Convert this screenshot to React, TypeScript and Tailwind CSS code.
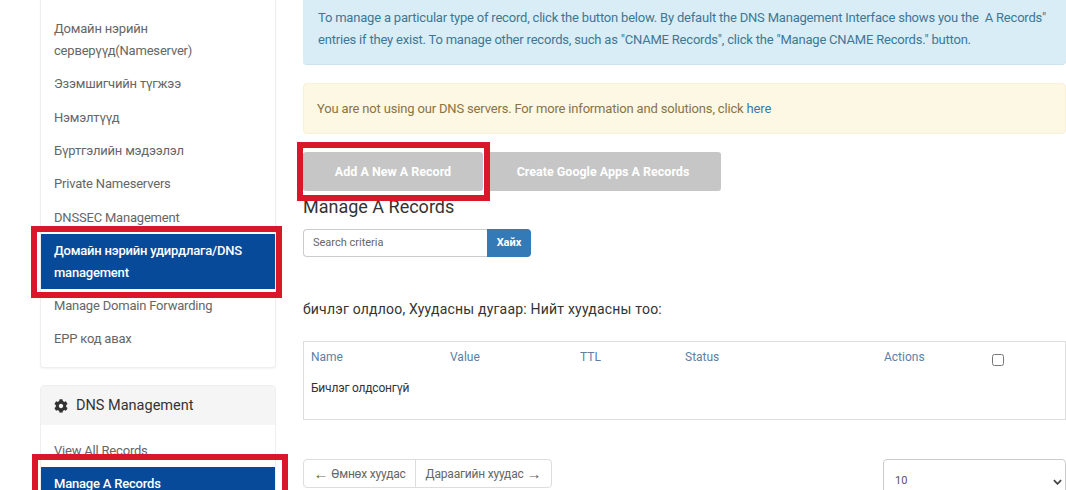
import React from "react";
import { FaCog } from "react-icons/fa";

const font = { fontFamily: "Roboto, 'Noto Sans', sans-serif" };

function Item({ children, active }: { children: React.ReactNode; active?: boolean }) {
  return (
    <a
      className={
        active
          ? "block px-[13px] py-[5.65px] text-[13px] leading-[22px] tracking-[-0.2px] font-medium text-white bg-[#074a9a]"
          : "block px-[13px] py-[5.65px] text-[13px] leading-[22px] tracking-[-0.2px] text-[#666666]"
      }
    >
      {children}
    </a>
  );
}

function Frame({ className }: { className: string }) {
  return <div className={"absolute border-[6px] border-[#d8182a] pointer-events-none " + className} />;
}

export default function App() {
  return (
    <div className="relative h-[490px] w-[1066px] overflow-hidden bg-white flex items-start" style={font}>
      <aside className="ml-[40px] w-[236px] shrink-0 flex flex-col gap-[17px]">
        <div className="bg-white border-x border-b border-[#eeeeee] rounded-b-[4px] pt-[12.5px] pb-[11px] shadow-[0_1px_2px_rgba(0,0,0,0.05)]">
          <Item>Домайн нэрийн серверүүд(Nameserver)</Item>
          <Item>Эзэмшигчийн түгжээ</Item>
          <Item>Нэмэлтүүд</Item>
          <Item>Бүртгэлийн мэдээлэл</Item>
          <Item>Private Nameservers</Item>
          <Item>DNSSEC Management</Item>
          <Item active>Домайн нэрийн удирдлага/DNS management</Item>
          <Item>Manage Domain Forwarding</Item>
          <Item>EPP код авах</Item>
        </div>
        <div className="bg-white border border-[#eeeeee] rounded-[4px]">
          <div className="h-[39px] bg-[#f5f5f5] flex items-center gap-[8px] px-[13px] text-[14.5px] text-[#333333]">
            <FaCog className="w-[14px] h-[14px]" />
            <span>DNS Management</span>
          </div>
          <div className="pt-[9px]">
            <Item>View All Records</Item>
            <Item active>Manage A Records</Item>
          </div>
        </div>
      </aside>

      <main className="ml-[27px] flex-1 min-w-0 flex flex-col">
        <div className="h-[65px] bg-[#d9edf7] border-b border-[#cde4ef] rounded-b-[4px] pt-[7px] px-[15px] text-[13px] leading-[22px] text-[#3f7793] tracking-[-0.2px]">
          To manage a particular type of record, click the button below. By default the DNS Management Interface shows you the&nbsp; A Records" entries if they exist. To manage other records, such as "CNAME Records", click the "Manage CNAME Records." button.
        </div>
        <div className="mt-[18px] h-[51px] bg-[#fcf8e3] border border-[#f8f0d8] rounded-[4px] px-[13px] flex items-center text-[13px] text-[#8a7345] tracking-[-0.17px]">
          <span>
            You are not using our DNS servers. For more information and solutions, click <a className="text-[#337ab7]">here</a>
          </span>
        </div>
        <div className="mt-[18px] flex gap-[2px]">
          <button className="w-[180px] h-[39px] pt-[1px] bg-[#c6c6c6] rounded-[3px] text-white text-[12.5px] font-bold">Add A New A Record</button>
          <button className="w-[236px] h-[39px] pt-[1px] bg-[#c6c6c6] rounded-[3px] text-white text-[12.5px] font-bold">Create Google Apps A Records</button>
        </div>
        <h3 className="mt-[5px] text-[18px] leading-[22px] text-[#333333]">Manage A Records</h3>
        <div className="mt-[11px] flex h-[28px]">
          <input
            readOnly
            placeholder="Search criteria"
            className="w-[184px] border border-[#cccccc] border-r-0 rounded-l-[4px] px-[9px] text-[11px] text-[#555555] placeholder:text-[#666666] outline-none"
          />
          <button className="w-[44px] bg-[#337ab7] rounded-r-[4px] text-white text-[11px] font-bold">Хайх</button>
        </div>
        <p className="mt-[42px] text-[14px] leading-[20px] text-[#333333] tracking-[0.2px]">бичлэг олдлоо, Хуудасны дугаар: Нийт хуудасны тоо:</p>
        <div className="mt-[22px] h-[79px] border border-[#dddddd] text-[12px]">
          <div className="flex h-[38px] pt-[7px] pl-[7px] text-[#5b7fa6] leading-[16px]">
            <span className="w-[139px]">Name</span>
            <span className="w-[130px]">Value</span>
            <span className="w-[105px]">TTL</span>
            <span className="w-[199px]">Status</span>
            <span className="w-[108px]">Actions</span>
            <input type="checkbox" readOnly className="w-[12px] h-[12px] mt-[5px]" />
          </div>
          <div className="pl-[7px] text-[#333333] leading-[16px] tracking-[-0.2px]">Бичлэг олдсонгүй</div>
        </div>
        <div className="mt-[39px] flex justify-between items-start">
          <div className="flex h-[29px] border border-[#dddddd] rounded-[4px] text-[12px] text-[#666666] tracking-[-0.2px]">
            <span className="w-[112px] justify-center flex items-center gap-[3px] border-r border-[#dddddd]"><span className="text-[15px] leading-[16px]">←</span>Өмнөх хуудас</span>
            <span className="w-[135px] justify-center flex items-center gap-[3px]">Дараагийн хуудас<span className="text-[15px] leading-[16px]">→</span></span>
          </div>
          <div className="w-[183px] h-[40px] border border-[#cccccc] rounded-[4px] flex items-center justify-between pl-[11px] pr-[3px] pt-[5px] text-[11px] text-[#555555]">
            <span>10</span>
            <svg viewBox="0 0 10 6" className="w-[9px] h-[6px]" fill="none" stroke="#444444" strokeWidth="2"><path d="M1 1l4 4 4-4" /></svg>
          </div>
        </div>
      </main>

      <Frame className="left-[31px] top-[226px] w-[251px] h-[72px]" />
      <Frame className="left-[32px] top-[454px] w-[256px] h-[72px]" />
      <Frame className="left-[297px] top-[142px] w-[193px] h-[59px]" />
    </div>
  );
}
